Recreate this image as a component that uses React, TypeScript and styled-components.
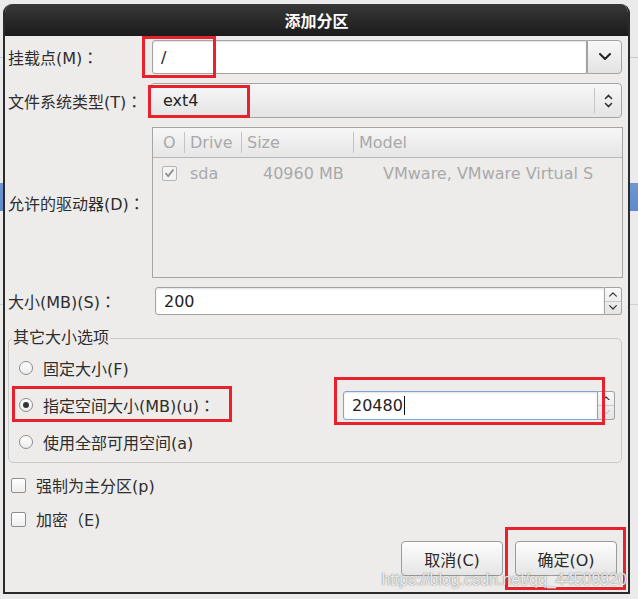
import React from 'react'
import styled, { createGlobalStyle } from 'styled-components'

const GlobalStyle = createGlobalStyle`
  html, body {
    margin: 0;
    padding: 0;
  }
  body {
    font-family: "DejaVu Sans", "Noto Sans CJK SC", sans-serif;
    font-size: 16px;
    color: #2e2e2e;
  }
`

const Desktop = styled.div`
  width: 638px;
  height: 599px;
  overflow: hidden;
  box-sizing: border-box;
  padding: 4px 0 0 3px;
  background:
    linear-gradient(to bottom, transparent 183px, #6f98d2 183px, #5f8bcb 211px, transparent 211px),
    linear-gradient(to bottom, transparent 57px, #c9c9c9 57px, #c9c9c9 58px, transparent 58px),
    linear-gradient(to bottom, transparent 304px, #d0d0d0 304px, #d0d0d0 305px, transparent 305px),
    #ebebeb;
`

const Dialog = styled.div`
  position: relative;
  width: 627px;
  height: 590px;
  box-sizing: border-box;
  border: 2px solid #2a2a2a;
  border-top: none;
  border-radius: 9px 9px 0 0;
  background: #edeceb;
  overflow: hidden;
  display: flex;
  flex-direction: column;
`

const TitleBar = styled.div`
  height: 32px;
  flex: none;
  display: flex;
  align-items: center;
  justify-content: center;
  background: linear-gradient(to bottom, #383838, #1b1b1b);
  color: #fff;
  font-weight: bold;
  font-size: 16px;
`

const Body = styled.div`
  padding: 4px 6px 0 3px;
  display: flex;
  flex-direction: column;
`

const FormGrid = styled.div`
  display: grid;
  grid-template-columns: 144px 1fr;
  grid-template-rows: 34px 35px 151px 28px;
  row-gap: 9px;
`

const Label = styled.div`
  align-self: center;
  white-space: nowrap;
`

const Colon = styled.span`
  font-family: "Noto Sans CJK TC", sans-serif;
`

const FieldRow = styled.div`
  display: flex;
  height: 100%;
`

const Entry = styled.div<{ $focus?: boolean }>`
  flex: 1;
  display: flex;
  align-items: center;
  padding-left: 8px;
  background: #fff;
  border: 1px solid ${p => (p.$focus ? '#7ea3d6' : '#a3a3a3')};
  border-radius: 3px 0 0 3px;
  box-shadow: inset 0 1px 2px rgba(0, 0, 0, 0.12);
  color: #222;
`

const Caret = styled.span`
  display: inline-block;
  width: 1px;
  height: 19px;
  margin-left: 1px;
  background: #111;
`

const DropButton = styled.div`
  width: 33px;
  display: flex;
  align-items: center;
  justify-content: center;
  border: 1px solid #a3a3a3;
  border-radius: 0 4px 4px 0;
  background: linear-gradient(to bottom, #f8f8f8, #e3e3e3);
`

const ComboButton = styled.div`
  height: 100%;
  box-sizing: border-box;
  display: flex;
  align-items: center;
  margin-left: -2px;
  padding-left: 12px;
  border: 1px solid #a5a5a5;
  border-radius: 4px;
  background: linear-gradient(to bottom, #f7f7f7, #e4e4e4);
  color: #222;
`

const ComboText = styled.span`
  flex: 1;
`

const ComboSep = styled.span`
  width: 1px;
  height: 25px;
  background: #c6c6c6;
`

const ComboArrows = styled.span`
  width: 26px;
  display: flex;
  justify-content: center;
`

const Tree = styled.div`
  border: 1px solid #a5a5a5;
  margin-right: -1px;
  background: #edeceb;
  display: grid;
  grid-template-columns: 31px 57px 112px 1fr;
  grid-template-rows: 30px 30px;
  color: #a9a9a9;
`

const HeaderCell = styled.div<{ $sep?: boolean }>`
  display: flex;
  align-items: center;
  background: linear-gradient(to bottom, #f6f6f6, #e6e6e6);
  border-bottom: 1px solid #b8b8b8;
  padding-left: ${p => (p.$sep ? 0 : 10)}px;
  &::before {
    content: '';
    display: ${p => (p.$sep ? 'block' : 'none')};
    width: 1px;
    height: 21px;
    margin-right: 5px;
    background: #c4c4c4;
  }
`

const Cell = styled.div<{ $pad: number }>`
  display: flex;
  align-items: center;
  padding-left: ${p => p.$pad}px;
  white-space: nowrap;
  overflow: hidden;
`

const TreeCheck = styled.span`
  width: 15px;
  height: 15px;
  box-sizing: border-box;
  border: 1px solid #b5b5b5;
  border-radius: 2px;
  background: #f3f3f3;
  display: flex;
  align-items: center;
  justify-content: center;
`

const SpinBox = styled.div<{ $width?: number }>`
  display: flex;
  height: ${p => (p.$width ? '29px' : '100%')};
  width: ${p => (p.$width ? `${p.$width}px` : 'auto')};
  margin-left: ${p => (p.$width ? 'auto' : '3px')};
  margin-right: ${p => (p.$width ? '6px' : '0')};
`

const SpinButtons = styled.div`
  width: 16px;
  display: flex;
  flex-direction: column;
  border: 1px solid #a3a3a3;
  border-left: none;
  border-radius: 0 3px 3px 0;
  background: linear-gradient(to bottom, #f8f8f8, #e4e4e4);
`

const SpinHalf = styled.div<{ $down?: boolean }>`
  flex: 1;
  display: flex;
  align-items: center;
  justify-content: center;
  border-top: ${p => (p.$down ? '1px solid #c8c8c8' : 'none')};
`

const Frame = styled.fieldset`
  margin: 13px 0 0 0;
  padding: 6px 0 6px 10px;
  border: 1px solid #c9c9c9;
  border-radius: 5px;
  display: flex;
  flex-direction: column;
  gap: 7px;
`

const Legend = styled.legend`
  padding: 0 1px;
  margin-left: -7px;
  line-height: 20px;
`

const OptionRow = styled.div<{ $tall?: boolean }>`
  display: flex;
  align-items: center;
  gap: 10px;
  height: ${p => (p.$tall ? 32 : 28)}px;
`

const Radio = styled.span<{ $checked?: boolean }>`
  width: 14px;
  height: 14px;
  box-sizing: border-box;
  border-radius: 50%;
  border: 1px solid #8c8c8c;
  background: linear-gradient(to bottom, #ffffff, #ececec);
  display: flex;
  align-items: center;
  justify-content: center;
  &::after {
    content: '';
    display: ${p => (p.$checked ? 'block' : 'none')};
    width: 6px;
    height: 6px;
    border-radius: 50%;
    background: #333;
  }
`

const CheckRow = styled.div`
  display: flex;
  align-items: center;
  gap: 10px;
  height: 24px;
  padding-left: 3px;
  margin-top: 10px;
`

const CheckBox = styled.span`
  width: 15px;
  height: 15px;
  box-sizing: border-box;
  border: 1px solid #8e8e8e;
  border-radius: 2px;
  background: linear-gradient(to bottom, #ffffff, #eeeeee);
`

const ButtonBar = styled.div`
  display: flex;
  justify-content: flex-end;
  gap: 12px;
  margin: 10px 5px 0 0;
`

const PushButton = styled.div`
  width: 102px;
  height: 35px;
  box-sizing: border-box;
  display: flex;
  align-items: center;
  justify-content: center;
  border: 1px solid #9b9b9b;
  border-radius: 4px;
  background: linear-gradient(to bottom, #fdfdfd, #e5e5e5);
  color: #2a2a2a;
`

const Mark = styled.div<{ $x: number; $y: number; $w: number; $h: number }>`
  position: absolute;
  left: ${p => p.$x}px;
  top: ${p => p.$y}px;
  width: ${p => p.$w}px;
  height: ${p => p.$h}px;
  box-sizing: border-box;
  border: 3px solid #e8222c;
  pointer-events: none;
`

const Watermark = styled.div`
  position: absolute;
  right: 1px;
  bottom: 2px;
  font-family: "Liberation Sans", Arial, sans-serif;
  font-size: 16px;
  line-height: 20px;
  color: rgba(255, 255, 255, 0.85);
  text-shadow: 0 0 1px rgba(90, 90, 90, 0.7), 0 0 2px rgba(120, 120, 120, 0.5);
  pointer-events: none;
`

const Chevron = ({ down = true, size = 12, color = '#222', width = 2 }: { down?: boolean; size?: number; color?: string; width?: number }) => (
  <svg width={size} height={size * 0.6} viewBox="0 0 12 7.2">
    <path
      d={down ? 'M1 1 L6 6 L11 1' : 'M1 6.2 L6 1.2 L11 6.2'}
      fill="none"
      stroke={color}
      strokeWidth={width}
      strokeLinecap="round"
      strokeLinejoin="round"
    />
  </svg>
)

const UpDown = () => (
  <svg width="9" height="16" viewBox="0 0 9 16">
    <path d="M1.5 5.5 L4.5 2.5 L7.5 5.5" fill="none" stroke="#333" strokeWidth="1.6" strokeLinecap="round" />
    <path d="M1.5 10.5 L4.5 13.5 L7.5 10.5" fill="none" stroke="#333" strokeWidth="1.6" strokeLinecap="round" />
  </svg>
)

const Tick = () => (
  <svg width="11" height="10" viewBox="0 0 11 10">
    <path d="M1.5 5 L4.2 8 L9.5 1.5" fill="none" stroke="#8d8d8d" strokeWidth="1.8" />
  </svg>
)

const Spin = ({ downDim }: { downDim?: boolean }) => (
  <SpinButtons>
    <SpinHalf>
      <Chevron down={false} size={8} color="#333" width={1.8} />
    </SpinHalf>
    <SpinHalf $down>
      <Chevron size={8} color={downDim ? '#c2c2c2' : '#333'} width={1.8} />
    </SpinHalf>
  </SpinButtons>
)

const marks = [
  { x: 137, y: 32, w: 74, h: 42 },
  { x: 143, y: 81, w: 102, h: 33 },
  { x: 7, y: 382, w: 220, h: 36 },
  { x: 329, y: 373, w: 271, h: 48 },
  { x: 500, y: 523, w: 121, h: 63 },
]

export default function App() {
  return (
    <Desktop>
      <GlobalStyle />
      <Dialog>
        <TitleBar>添加分区</TitleBar>
        <Body>
          <FormGrid>
            <Label>挂载点(M)<Colon>：</Colon></Label>
            <FieldRow>
              <Entry>/</Entry>
              <DropButton>
                <Chevron />
              </DropButton>
            </FieldRow>

            <Label>文件系统类型(T)<Colon>：</Colon></Label>
            <ComboButton>
              <ComboText>ext4</ComboText>
              <ComboSep />
              <ComboArrows>
                <UpDown />
              </ComboArrows>
            </ComboButton>

            <Label>允许的驱动器(D)<Colon>：</Colon></Label>
            <Tree>
              <HeaderCell>O</HeaderCell>
              <HeaderCell $sep>Drive</HeaderCell>
              <HeaderCell $sep>Size</HeaderCell>
              <HeaderCell $sep>Model</HeaderCell>
              <Cell $pad={9}>
                <TreeCheck>
                  <Tick />
                </TreeCheck>
              </Cell>
              <Cell $pad={6}>sda</Cell>
              <Cell $pad={22}>40960 MB</Cell>
              <Cell $pad={30}>VMware, VMware Virtual S</Cell>
            </Tree>

            <Label>大小(MB)(S)<Colon>：</Colon></Label>
            <SpinBox>
              <Entry>200</Entry>
              <Spin />
            </SpinBox>
          </FormGrid>

          <Frame>
            <Legend>其它大小选项</Legend>
            <OptionRow>
              <Radio />
              固定大小(F)
            </OptionRow>
            <OptionRow $tall>
              <Radio $checked />
              <span>指定空间大小(MB)(u)<Colon>：</Colon></span>
              <SpinBox $width={272}>
                <Entry $focus>
                  20480
                  <Caret />
                </Entry>
                <Spin downDim />
              </SpinBox>
            </OptionRow>
            <OptionRow>
              <Radio />
              使用全部可用空间(a)
            </OptionRow>
          </Frame>

          <CheckRow>
            <CheckBox />
            强制为主分区(p)
          </CheckRow>
          <CheckRow>
            <CheckBox />
            加密（E)
          </CheckRow>

          <ButtonBar>
            <PushButton>取消(C)</PushButton>
            <PushButton>确定(O)</PushButton>
          </ButtonBar>
        </Body>

        {marks.map((m, i) => (
          <Mark key={i} $x={m.x} $y={m.y} $w={m.w} $h={m.h} />
        ))}
        <Watermark>https://blog.csdn.net/qq_44509920</Watermark>
      </Dialog>
    </Desktop>
  )
}
